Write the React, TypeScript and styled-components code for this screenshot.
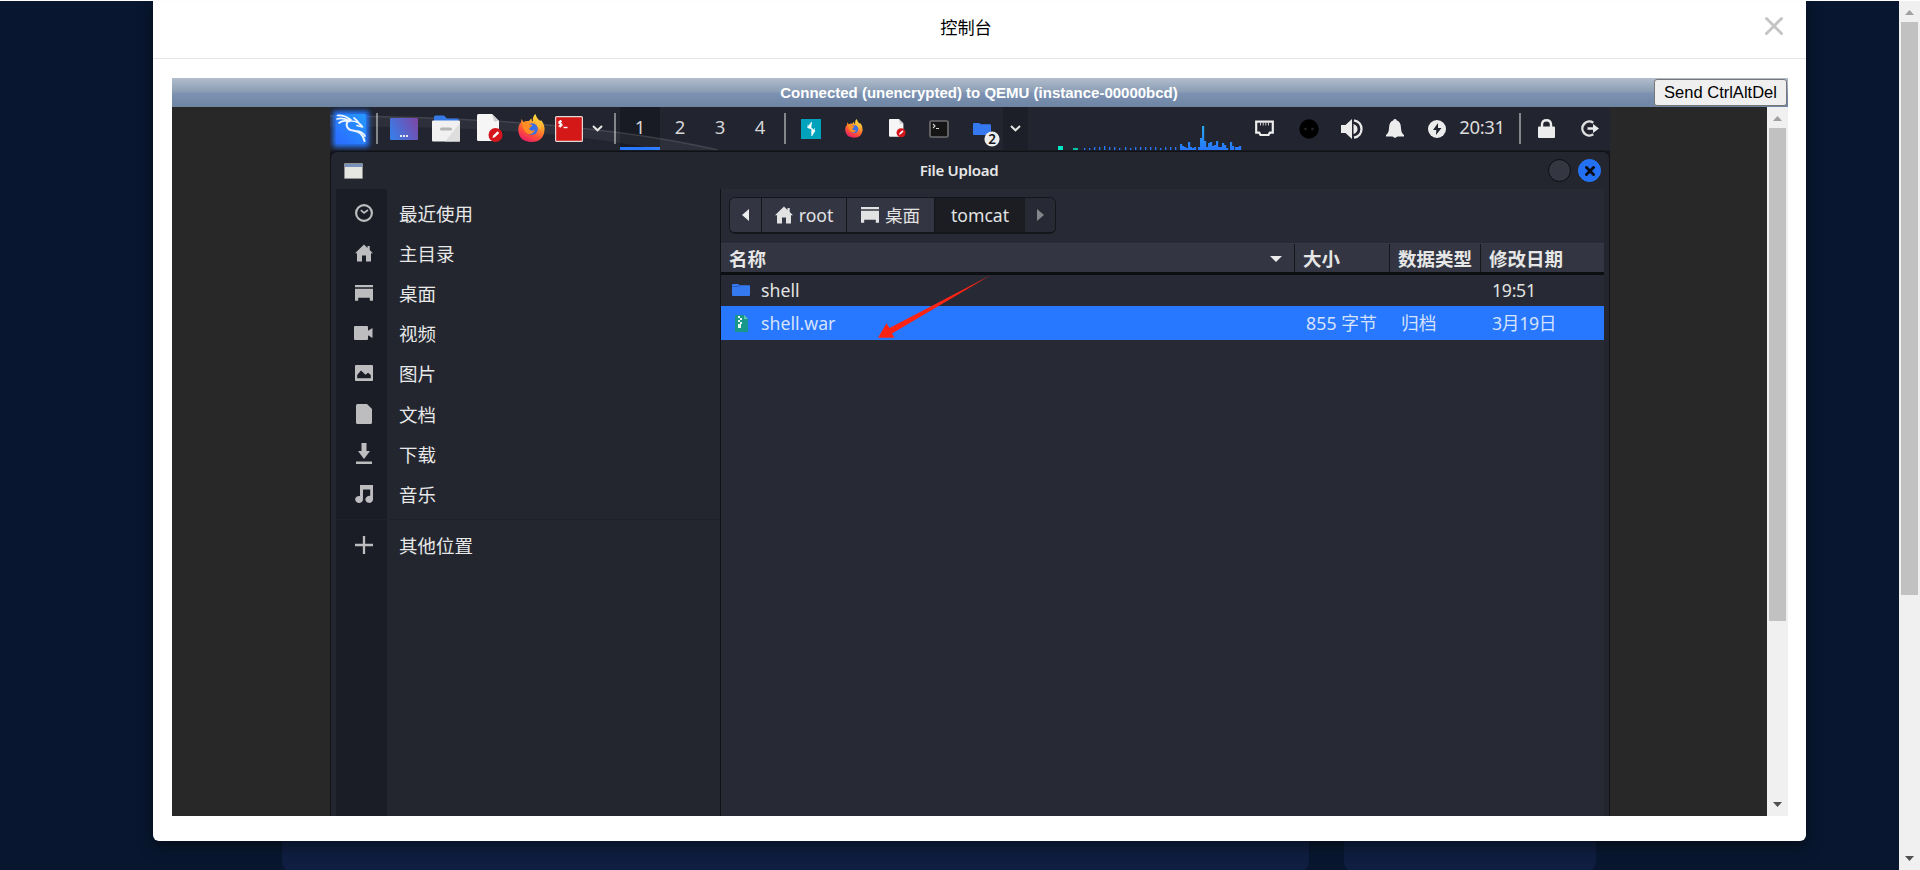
import React from "react";
import styled, { createGlobalStyle, css } from "styled-components";

const GlobalStyle = createGlobalStyle`
  * { box-sizing: border-box; }
  body { margin: 0; overflow: hidden; background: #08172f; }
`;

const uiFont = `"Noto Sans", "Noto Sans CJK SC", sans-serif`;

const Page = styled.div`
  display: flex;
  height: 870px;
  width: 1920px;
  overflow: hidden;
  border-top: 1px solid #fdfdfd;
`;
const Backdrop = styled.main`
  position: relative;
  flex: 1;
  padding: 0 93px 0 153px;
  background: #08172f;
`;
const BackCard = styled.div<{ $left: number; $width: number }>`
  position: absolute;
  left: ${(p) => p.$left}px;
  width: ${(p) => p.$width}px;
  top: 760px;
  height: 112px;
  border-radius: 12px;
  background: #0f1e41;
`;
const Modal = styled.section`
  position: relative;
  height: 841px;
  margin-top: -1px;
  padding-bottom: 25px;
  display: flex;
  flex-direction: column;
  background: #fff;
  border-radius: 0 0 6px 6px;
  box-shadow: 0 5px 15px rgba(0, 0, 0, 0.5);
`;
const ModalHeader = styled.header`
  height: 59px;
  flex: none;
  padding: 0 20px 5px;
  display: grid;
  grid-template-columns: 1fr auto 1fr;
  align-items: center;
  border-bottom: 1px solid #e5e5e5;
`;
const ModalTitle = styled.h1`
  grid-column: 2;
  margin: 1px 27px 0 0;
  font: 400 17.2px/24px "Noto Sans CJK SC", sans-serif;
  color: #000;
`;
const CloseButton = styled.button`
  justify-self: end;
  display: flex;
  padding: 0;
  margin: 0 2px 2px 0;
  border: 0;
  background: none;
`;
const Console = styled.div`
  flex: 1;
  min-height: 0;
  margin: 19px 18px 0 19px;
  display: flex;
  flex-direction: column;
`;
const StatusBar = styled.div`
  height: 29px;
  flex: none;
  display: grid;
  grid-template-columns: 1fr auto 1fr;
  align-items: center;
  background: linear-gradient(#b2bdcd 0%, #899cb3 49%, #7e93b3 51%, #6e84a3 100%);
  color: #fff;
  font: bold 15px/29px "Liberation Sans", Arial, sans-serif;
`;
const StatusText = styled.span`
  grid-column: 2;
  margin-right: 2px;
`;
const SendButton = styled.button`
  justify-self: end;
  width: 133px;
  height: 27px;
  margin-right: 1px;
  padding: 0 0 1px;
  border: 1px solid #767676;
  border-radius: 3px;
  background: #efefef;
  color: #000;
  font: 16.5px/24px "Liberation Sans", Arial, sans-serif;
  white-space: nowrap;
`;
const Viewport = styled.div`
  flex: 1;
  min-height: 0;
  display: flex;
  background: #282828;
`;
const Desktop = styled.div`
  width: 1280px;
  margin: 0 157px 0 158px;
  flex: none;
  display: flex;
  flex-direction: column;
  overflow: hidden;
  background: #17181f;
  font-family: ${uiFont};
  color: #e6e6e6;
`;

/* scrollbars */
const Track = styled.div`
  width: 21px;
  flex: none;
  display: flex;
  flex-direction: column;
  align-items: center;
  background: #f0f0f0;
`;
const Thumb = styled.div<{ $height: number }>`
  width: 17px;
  height: ${(p) => p.$height}px;
  margin-bottom: auto;
  background: #c1c1c1;
`;
const Step = styled.svg`
  width: 21px;
  height: 21px;
  flex: none;
`;
const Scrollbar = ({ thumb }: { thumb: number }) => (
  <Track>
    <Step viewBox="0 0 21 21"><path d="M6 14h9L10.500 9z" fill="#a0a0a0" /></Step>
    <Thumb $height={thumb} />
    <Step viewBox="0 0 21 21"><path d="M6 7h9l-4.500 5z" fill="#505050" /></Step>
  </Track>
);

/* desktop panel */
const Panel = styled.div`
  position: relative;
  height: 44px;
  flex: none;
  display: flex;
  align-items: stretch;
  background: #222430;
  border-bottom: 1px solid #191b23;
`;
const Wallpaper = styled.svg`
  position: absolute;
  left: 0;
  top: 0;
  width: 420px;
  height: 43px;
  pointer-events: none;
`;
const Slot = styled.div<{ $w: number; $dark?: boolean }>`
  width: ${(p) => p.$w}px;
  flex: none;
  display: flex;
  align-items: center;
  justify-content: center;
  ${(p) => p.$dark && css`background: #1c1e28;`}
  svg { display: block; overflow: visible; flex: none; z-index: 1; }
`;
const Divider = styled.div`
  width: 2px;
  height: 31px;
  margin-top: 6px;
  flex: none;
  background: #85868c;
`;
const Workspace = styled.div<{ $active?: boolean }>`
  width: 40px;
  padding-top: 1px;
  flex: none;
  text-align: center;
  font-size: 18.500px;
  line-height: 38px;
  color: #d6d6d8;
  border-bottom: 3px solid ${(p) => (p.$active ? "#2777ff" : "transparent")};
  background: ${(p) => (p.$active ? "#191b24" : "transparent")};
`;
const Clock = styled.div`
  width: 62px;
  flex: none;
  text-align: center;
  font-size: 18.500px;
  line-height: 40px;
  letter-spacing: -0.4px;
  color: #dcdcdc;
`;
const Graph = styled.svg`
  width: 199px;
  height: 43px;
  flex: none;
`;

/* file dialog */
const Dialog = styled.div`
  flex: 1;
  min-height: 0;
  display: flex;
  flex-direction: column;
  border: 1px solid #101117;
  border-bottom: 0;
  border-radius: 7px 7px 0 0;
  padding: 0 5px;
  background: #23262f;
`;
const TitleBar = styled.div`
  height: 37px;
  flex: none;
  display: grid;
  grid-template-columns: 1fr auto 1fr;
  align-items: center;
  padding: 0 3px 0 8px;
`;
const DialogTitle = styled.div`
  font-size: 15px;
  font-weight: 600;
  letter-spacing: -0.25px;
  line-height: 20px;
  padding: 0 27px 2px 0;
`;
const WindowButtons = styled.div`
  display: flex;
  gap: 7px;
  justify-self: end;
`;
const RoundButton = styled.div<{ $close?: boolean }>`
  width: 23px;
  height: 23px;
  border-radius: 50%;
  display: grid;
  place-items: center;
  border: 1px solid ${(p) => (p.$close ? "#2777ff" : "#0b0c10")};
  background: ${(p) => (p.$close ? "#2470f2" : "#343742")};
`;
const DialogBody = styled.div`
  flex: 1;
  min-height: 0;
  display: flex;
`;
const Sidebar = styled.nav`
  width: 384px;
  flex: none;
  padding-top: 4px;
  background: linear-gradient(to right, #1a1d25 51px, #23262f 51px);
`;
const Place = styled.div<{ $other?: boolean }>`
  height: 40.1px;
  display: grid;
  grid-template-columns: 51px auto;
  column-gap: 12px;
  align-items: center;
  color: #e8e8e8;
  font-size: 18.500px;
  line-height: 24px;
  ${(p) => p.$other && css`
    margin-top: 5px;
    height: 51px;
    border-top: 1px solid #1e212a;
  `}
  span { padding-top: 2px; }
  svg { justify-self: center; margin-left: 4px; color: #bdbdc0; }
`;
const Pane = styled.div`
  flex: 1;
  min-width: 0;
  border-left: 1px solid #101117;
  background: #272a34;
`;
const PathBar = styled.div`
  width: 327px;
  height: 37px;
  margin: 8px 0 9px 8px;
  display: flex;
  border: 1px solid #15161c;
  border-bottom-width: 2px;
  border-radius: 6px;
  overflow: hidden;
`;
const Crumb = styled.div<{ $w: number; $state?: "current" | "disabled" }>`
  width: ${(p) => p.$w}px;
  flex: none;
  display: flex;
  align-items: center;
  justify-content: center;
  gap: 6px;
  font-size: 17.6px;
  line-height: 24px;
  color: #e2e2e2;
  background: ${(p) => (p.$state === "current" ? "#1b1d23" : p.$state ? "#272a34" : "#333642")};
  border-right: ${(p) => (p.$state ? "0" : "1px solid #15161c")};
`;
const columns = css`
  display: grid;
  grid-template-columns: 574px 95px 91px 1fr;
`;
const HeaderRow = styled.div`
  ${columns}
  height: 32px;
  border-top: 1px solid #373a46;
  border-bottom: 3px solid #0d0e12;
  background: #333642;
`;
const HeaderCell = styled.div<{ $last?: boolean }>`
  display: flex;
  align-items: center;
  justify-content: space-between;
  padding: 1px 12px 0 8px;
  white-space: nowrap;
  font-size: 18.500px;
  line-height: 24px;
  font-weight: 700;
  border-right: ${(p) => (p.$last ? "0" : "1px solid #15161c")};
`;
const FileRow = styled.div<{ $selected?: boolean }>`
  ${columns}
  height: ${(p) => (p.$selected ? 34 : 31)}px;
  padding-bottom: ${(p) => (p.$selected ? 0 : 2)}px;
  align-items: center;
  font-size: 17.7px;
  line-height: 24px;
  background: ${(p) => (p.$selected ? "#2777ff" : "transparent")};
  color: ${(p) => (p.$selected ? "#d5e2fb" : "#e2e2e2")};
`;
const Cell = styled.div<{ $tight?: boolean }>`
  padding-left: 11px;
  white-space: nowrap;
  letter-spacing: ${(p) => (p.$tight ? "-0.3px" : "0.1px")};
`;
const NameCell = styled.div`
  display: grid;
  grid-template-columns: 18px auto;
  column-gap: 11px;
  justify-content: start;
  align-items: center;
  padding-left: 11px;
  svg { justify-self: center; }
`;
const Arrow = styled.svg`
  position: absolute;
  left: 725px;
  top: 275px;
  width: 113px;
  height: 64px;
`;

const Kali = () => (
  <svg width="36" height="36" viewBox="0 0 36 36">
    <defs>
      <linearGradient id="kali" x1="0" y1="1" x2="1" y2="0">
        <stop offset="0" stopColor="#2a6bff" /><stop offset="1" stopColor="#2599ff" />
      </linearGradient>
      <filter id="glow" x="-30%" y="-30%" width="160%" height="160%"><feGaussianBlur stdDeviation="2.500" /></filter>
    </defs>
    <rect x="0" y="0" width="36" height="36" rx="3" fill="#2777ff" filter="url(#glow)" />
    <rect x="3" y="3" width="30" height="30" rx="2" fill="url(#kali)" />
    <g fill="none" stroke="#eef5ff" strokeLinecap="round" strokeLinejoin="round">
      <path d="M4.500 4.500Q12 4 18 9M4 8Q10 6 17 10M6 12Q10 8.500 16 10.500" strokeWidth="1.700" />
      <path d="M16 9.500C11.500 13 14 19 20 19.500C26 20 30 23 31.500 30" strokeWidth="2" />
      <path d="M25 20Q30 21 32 25M18 10Q26 10 29.500 16L24 14.500M21 7Q24 9 26.500 13" strokeWidth="1.700" />
    </g>
  </svg>
);
const Screen = () => (
  <svg width="28" height="22" viewBox="0 0 28 22">
    <defs><linearGradient id="scr" x1="0" x2="1" y1=".6" y2=".2"><stop stopColor="#3b7be6" /><stop offset="1" stopColor="#7b48a8" /></linearGradient></defs>
    <rect width="28" height="22" rx="1" fill="url(#scr)" />
    <path d="M10 17h2v2h-2zm3 0h2v2h-2zm3 0h2v2h-2z" fill="#e9e9f5" />
  </svg>
);
const Files = () => (
  <svg width="28" height="26" viewBox="0 0 28 26">
    <path d="M2 6V1q0-1.500 1.500-1.500H12l3 3h11.500V7H2z" fill="#3579e6" />
    <rect y="4.500" width="28" height="21" rx="1" fill="#f1f1f1" />
    <path d="M28 7v18.500H13z" fill="#dedede" />
    <rect x="8" y="11.500" width="12" height="3" rx="1.500" fill="#b5b5b5" />
  </svg>
);
const Editor = ({ w }: { w: number }) => (
  <svg width={w} height={w * 1.08} viewBox="0 0 26 28">
    <path d="M0 1.500Q0 0 1.500 0H15l7 7v18.500q0 1.500-1.500 1.500h-19Q0 27 0 25.500z" fill="#f6f6f6" />
    <path d="M15 0l7 7-5 .5z" fill="#d0d0d0" />
    <circle cx="18.500" cy="21" r="7" fill="#d4161c" />
    <path d="M15.500 24l.7-2.500 4.300-4.300 1.700 1.700-4.300 4.300z" fill="#fff" />
  </svg>
);
const Firefox = ({ w, id }: { w: number; id: string }) => (
  <svg width={w} height={w * 1.04} viewBox="0 0 27 28">
    <defs>
      <linearGradient id={id} x1=".8" x2=".3" y1="0" y2="1">
        <stop stopColor="#fff04a" /><stop offset=".4" stopColor="#ff9a2a" /><stop offset=".7" stopColor="#ff5038" /><stop offset="1" stopColor="#e81d68" />
      </linearGradient>
    </defs>
    <path d="M3.500 5l2 3Q8 6.500 11 7q1-2 2.500-2.500-.5 2 1.500 3Q14 3 17.500 0q1 4.500 5 7l.5-1q4 5 3.500 10Q25.500 28 13.500 28 1 27.500.3 16.500 0 11 3 8.500z" fill={`url(#${id})`} />
    <circle cx="14" cy="15" r="5.800" fill="#3b6fe8" />
    <path d="M4 9q4-2 6.500 1l3 .8q1.500.3 0 1.700-2 .8-2.500 2.500 2 3 6 1-2.500 5.500-7.500 3.500Q5 17 4 9z" fill="#ff8d22" />
    <path d="M17 5q7 4 5.500 11-1-3-3-3.500Q19 8 15.500 7z" fill="#ffc037" />
  </svg>
);
const RedTerminal = () => (
  <svg width="28" height="26" viewBox="0 0 28 26">
    <rect x=".6" y=".6" width="26.800" height="24.800" rx="1" fill="#d41818" stroke="#e6d8d4" strokeWidth="1.200" />
    <path d="M7 5.500H4.800q-1 0-1 1t1 1.100h1q1.200 0 1.200 1.200t-1.200 1.200H3.500M5.300 4v7.500" fill="none" stroke="#fff" strokeWidth="1.300" />
    <path d="M8.500 11.500h4" stroke="#fff" strokeWidth="1.400" />
  </svg>
);
const Chevron = () => (
  <svg width="11" height="7" viewBox="0 0 11 7"><path d="M1 1l4.500 4.300L10 1" fill="none" stroke="#e6e6e6" strokeWidth="2" /></svg>
);
const Burp = () => (
  <svg width="20" height="20" viewBox="0 0 20 20">
    <rect width="20" height="20" fill="#00a3bb" />
    <path d="M10.500 3L6.500 8.700l4.200 1.200v7L14 11.800l-4-3zM7 5.500v3M13.500 9v3.500" fill="#fff" stroke="#fff" strokeWidth=".6" />
  </svg>
);
const SmallTerminal = () => (
  <svg width="20" height="18" viewBox="0 0 20 18">
    <rect x="1" y="1" width="18" height="16" rx="1.500" fill="#151515" stroke="#6d6d70" strokeWidth="1.700" />
    <path d="M4 4l2 2-2 2M7 8.500h3" fill="none" stroke="#d5d5d5" strokeWidth="1.100" />
  </svg>
);
const FolderGlyph = () => <path d="M0 1Q0 0 1 0h5l2 1.200h9q1 0 1 1v8.800q0 1-1 1H1q-1 0-1-1z" fill="#3579f0" />;
const Folder = () => (
  <svg width="18" height="12" viewBox="0 0 18 12"><FolderGlyph /><path d="M0 2.500h7l1-.7" stroke="#245dc8" fill="none" /></svg>
);
const FolderStack = () => (
  <svg width="20" height="20" viewBox="0 0 20 20">
    <g transform="translate(1 4)"><FolderGlyph /></g>
    <circle cx="20" cy="20" r="7.600" fill="#ededed" />
    <text x="20" y="25" textAnchor="middle" fontSize="13.500" fontWeight="600" fill="#15161c" fontFamily="Noto Sans, sans-serif">2</text>
  </svg>
);
const Ethernet = () => (
  <svg width="19" height="17" viewBox="0 0 19 17">
    <path d="M1.200 1.700h16.600v11h-3l-1.300 2.300h-8l-1.300-2.300h-3z" fill="none" stroke="#ececec" strokeWidth="2.200" />
    <path d="M5.500 2v3.500M8.200 2v3.500M10.800 2v3.500M13.500 2v3.500" stroke="#c8c8c8" strokeWidth="1" />
  </svg>
);
const Face = () => (
  <svg width="20" height="20" viewBox="0 0 20 20"><circle cx="10" cy="10" r="9.700" fill="#000" /><circle cx="6.500" cy="10" r="1.300" fill="#25262c" /><circle cx="13.500" cy="10" r="1.300" fill="#25262c" /></svg>
);
const Volume = () => (
  <svg width="22" height="20" viewBox="0 0 22 20">
    <path d="M0 6h4.500L11 0v20l-6.500-6H0zM12.500 5q4 1.500 4 5t-4 5z" fill="#ececec" />
    <path d="M13 1.300c10 2 10 15.400 0 17.400" fill="none" stroke="#ececec" strokeWidth="2.300" />
  </svg>
);
const Bell = () => (
  <svg width="18" height="19" viewBox="0 0 18 19"><path d="M9 0q1.500 0 1.500 1.300Q15 3 15 9q0 5 3 7v1.500H0V16q3-2 3-7 0-6 4.500-7.700Q7.500 0 9 0zM6.500 17.500h5L9 19z" fill="#ececec" /></svg>
);
const Power = () => (
  <svg width="18" height="18" viewBox="0 0 18 18"><circle cx="9" cy="9" r="9" fill="#ececec" /><path d="M10 3L5 10h3.300L8 15l5.500-7H10z" fill="#222430" /></svg>
);
const LockIcon = () => (
  <svg width="17" height="19" viewBox="0 0 17 19"><rect y="7.500" width="17" height="11.500" rx="1" fill="#ececec" /><path d="M4 8V5.500q0-4.300 4.500-4.300T13 5.500V8" fill="none" stroke="#ececec" strokeWidth="2.400" /></svg>
);
const Logout = () => (
  <svg width="18" height="17" viewBox="0 0 18 17"><path d="M12.300 2.700A7 7 0 1 0 12.300 14.300" fill="none" stroke="#dedede" strokeWidth="2.500" /><path d="M6.500 7.200H12V4l6 4.500-6 4.500V9.800H6.500z" fill="#ececec" /></svg>
);

const HomeIcon = () => (
  <svg width="18" height="18" viewBox="0 0 18 18"><path d="M9 .5l3.500 3.400V2h2.200v4L18 9.300h-2V17.500h-5v-6H7v6H2V9.300H0z" fill="currentColor" /></svg>
);
const DesktopIcon = () => (
  <svg width="18" height="16" viewBox="0 0 18 16"><path d="M0 0h18v2.200H0zM0 3.700h18v12h-3.200v-3H3.200v3H0z" fill="currentColor" /></svg>
);
const PlaceIcons: Record<string, React.ReactNode> = {
  recent: <svg width="18" height="18" viewBox="0 0 18 18" fill="none" stroke="currentColor"><circle cx="9" cy="9" r="7.900" strokeWidth="2.200" /><path d="M5.800 6.200L9 9l4-3" strokeWidth="1.700" /></svg>,
  home: <HomeIcon />,
  desktop: <DesktopIcon />,
  video: <svg width="19" height="14" viewBox="0 0 19 14"><path d="M1 0h12q1 0 1 1v3.800L18.500 2v10L14 9.200V13q0 1-1 1H1q-1 0-1-1V1q0-1 1-1z" fill="currentColor" /></svg>,
  picture: <svg width="18" height="16" viewBox="0 0 18 16"><path fillRule="evenodd" d="M1 0h16q1 0 1 1v14q0 1-1 1H1q-1 0-1-1V1q0-1 1-1zM2.200 13.200h13.600V10L13 7.700l-2.500 2L6 5.500 2.200 10z" fill="currentColor" /></svg>,
  document: <svg width="16" height="20" viewBox="0 0 16 20"><path d="M1.500 0H11l5 5v13.500q0 1.500-1.500 1.500h-13Q0 20 0 18.500v-17Q0 0 1.500 0z" fill="currentColor" /></svg>,
  download: <svg width="16" height="21" viewBox="0 0 16 21"><path d="M5.500 0h5v8H14l-6 8-6-8h3.500zM0 18.500h16V21H0z" fill="currentColor" /></svg>,
  music: <svg width="18" height="18" viewBox="0 0 18 18"><path d="M5 0h13v14.500a3.800 3.500 0 1 1-2.800-3.500V4.500H8v10A3.900 3.500 0 1 1 5 11z" fill="currentColor" /></svg>,
  other: <svg width="18" height="18" viewBox="0 0 18 18"><path d="M9 0v18M0 9h18" stroke="currentColor" strokeWidth="2.300" /></svg>,
};
const places = [
  ["recent", "最近使用"], ["home", "主目录"], ["desktop", "桌面"], ["video", "视频"],
  ["picture", "图片"], ["document", "文档"], ["download", "下载"], ["music", "音乐"], ["other", "其他位置"],
];

/* CPU history: [x, height] in panel pixels */
const bars = [
  [26, 2], [31, 2], [36, 3], [41, 3], [46, 4], [51, 3], [56, 3], [61, 2], [67, 3], [72, 2], [77, 3], [82, 3], [87, 3], [92, 3], [97, 3], [102, 2], [107, 3], [112, 3], [117, 3],
  [122, 6], [124, 4], [126, 3], [128, 2], [130, 8], [132, 3], [134, 2], [136, 3], [140, 3], [142, 12], [144, 24], [146, 9], [148, 3], [150, 7], [152, 8], [154, 4], [156, 5], [158, 9], [160, 3], [162, 3], [164, 7], [166, 5], [168, 2],
  [172, 8], [174, 4], [177, 3], [179, 3], [181, 4],
];

const App = () => (
  <Page>
    <GlobalStyle />
    <Backdrop>
      <BackCard $left={282} $width={1027} />
      <BackCard $left={1344} $width={252} />
      <Modal>
        <ModalHeader>
          <ModalTitle>控制台</ModalTitle>
          <CloseButton aria-label="Close">
            <svg width="20" height="20" viewBox="0 0 20 20"><path d="M2.500 2.500l15 15M17.500 2.500l-15 15" stroke="#c4c4c4" strokeWidth="2.900" strokeLinecap="round" /></svg>
          </CloseButton>
        </ModalHeader>
        <Console>
          <StatusBar>
            <StatusText>Connected (unencrypted) to QEMU (instance-00000bcd)</StatusText>
            <SendButton>Send CtrlAltDel</SendButton>
          </StatusBar>
          <Viewport>
            <Desktop>
              <Panel>
                <Wallpaper viewBox="0 0 420 43">
                  <path d="M0 9C160 10 290 20 388 43H330C240 24 110 18 0 20z" fill="#fff" fillOpacity="0.05" />
                  <path d="M0 9C160 10 290 20 388 43" fill="none" stroke="#fff" strokeOpacity="0.12" strokeWidth="1.500" />
                </Wallpaper>
                <Slot $w={42}><Kali /></Slot>
                <Slot $w={4} />
                <Divider />
                <Slot $w={52}><Screen /></Slot>
                <Slot $w={32}><Files /></Slot>
                <Slot $w={56}><Editor w={26} /></Slot>
                <Slot $w={27}><Firefox w={27} id="ffLarge" /></Slot>
                <Slot $w={48}><RedTerminal /></Slot>
                <Slot $w={9}><Chevron /></Slot>
                <Slot $w={12} />
                <Divider />
                <Slot $w={4} />
                <Workspace $active>1</Workspace>
                <Workspace>2</Workspace>
                <Workspace>3</Workspace>
                <Workspace>4</Workspace>
                <Slot $w={4} />
                <Divider />
                <Slot $w={50}><Burp /></Slot>
                <Slot $w={36}><Firefox w={18} id="ffSmall" /></Slot>
                <Slot $w={50}><Editor w={17} /></Slot>
                <Slot $w={34}><SmallTerminal /></Slot>
                <Slot $w={4} />
                <Slot $w={43}><FolderStack /></Slot>
                <Slot $w={25} $dark><Chevron /></Slot>
                <Slot $w={30} />
                <Graph viewBox="0 0 199 43">
                  <defs><linearGradient id="cpu" gradientUnits="userSpaceOnUse" x1="0" x2="0" y1="18" y2="43"><stop stopColor="#26a9e6" /><stop offset="1" stopColor="#2777ff" /></linearGradient></defs>
                  <rect x="0" y="39" width="5" height="4" fill="#00e8c8" />
                  <rect x="15" y="41" width="5" height="2" fill="#00c0a8" />
                  {bars.map(([x, h]) => <rect key={x} x={x} y={43 - h} width={x > 120 ? 2.2 : 1.3} height={h} fill="url(#cpu)" />)}
                </Graph>
                <Slot $w={15}><Ethernet /></Slot>
                <Slot $w={73}><Face /></Slot>
                <Slot $w={14}><Volume /></Slot>
                <Slot $w={72}><Bell /></Slot>
                <Slot $w={12}><Power /></Slot>
                <Slot $w={8} />
                <Clock>20:31</Clock>
                <Slot $w={6} />
                <Divider />
                <Slot $w={51}><LockIcon /></Slot>
                <Slot $w={36}><Logout /></Slot>
              </Panel>
              <Dialog>
                <TitleBar>
                  <svg width="19" height="16" viewBox="0 0 19 16"><rect width="19" height="16" rx="1" fill="#8d8f92" /><rect x="1" y="1" width="17" height="14" fill="#e5e6e2" /><rect x="1" y="1" width="17" height="3" fill="#7792bd" /></svg>
                  <DialogTitle>File Upload</DialogTitle>
                  <WindowButtons>
                    <RoundButton />
                    <RoundButton $close><svg width="10" height="10" viewBox="0 0 10 10"><path d="M.5.5l9 9M9.500.5l-9 9" stroke="#0a0c14" strokeWidth="2.800" /></svg></RoundButton>
                  </WindowButtons>
                </TitleBar>
                <DialogBody>
                  <Sidebar>
                    {places.map(([icon, label]) => (
                      <Place key={icon} $other={icon === "other"}>{PlaceIcons[icon]}<span>{label}</span></Place>
                    ))}
                  </Sidebar>
                  <Pane>
                    <PathBar>
                      <Crumb $w={32}><svg width="7" height="12" viewBox="0 0 7 12"><path d="M7 0v12L0 6z" fill="#ececec" /></svg></Crumb>
                      <Crumb $w={85}><HomeIcon />root</Crumb>
                      <Crumb $w={88}><DesktopIcon />桌面</Crumb>
                      <Crumb $w={90} $state="current">tomcat</Crumb>
                      <Crumb $w={31} $state="disabled"><svg width="7" height="12" viewBox="0 0 7 12"><path d="M0 0v12l7-6z" fill="#85868b" /></svg></Crumb>
                    </PathBar>
                    <HeaderRow>
                      <HeaderCell>名称<svg width="12" height="6" viewBox="0 0 12 6"><path d="M0 0h12L6 6z" fill="#ececec" /></svg></HeaderCell>
                      <HeaderCell>大小</HeaderCell>
                      <HeaderCell>数据类型</HeaderCell>
                      <HeaderCell $last>修改日期</HeaderCell>
                    </HeaderRow>
                    <FileRow>
                      <NameCell><Folder />shell</NameCell>
                      <Cell /><Cell /><Cell $tight>19:51</Cell>
                    </FileRow>
                    <FileRow $selected>
                      <NameCell>
                        <svg width="13" height="17" viewBox="0 0 13 17"><path d="M0 0h9l4 4v13H0z" fill="#17988a" /><path d="M9 0v4h4z" fill="#66c6b0" /><path d="M3 1h2v2H3zm2 2h2v2H5zM3 5h2v2H3zm2 2h2v2H5zM3 9h3v4H3z" fill="#e4f8f2" /></svg>
                        shell.war
                      </NameCell>
                      <Cell>855 字节</Cell><Cell>归档</Cell><Cell $tight>3月19日</Cell>
                    </FileRow>
                  </Pane>
                </DialogBody>
              </Dialog>
            </Desktop>
            <Scrollbar thumb={493} />
          </Viewport>
        </Console>
        <Arrow viewBox="0 0 113 64"><path d="M113 0L11.500 53 8.500 48.300 0 62.700H16.500L14 58.500z" fill="#ff2314" /></Arrow>
      </Modal>
    </Backdrop>
    <Scrollbar thumb={573} />
  </Page>
);

export default App;
